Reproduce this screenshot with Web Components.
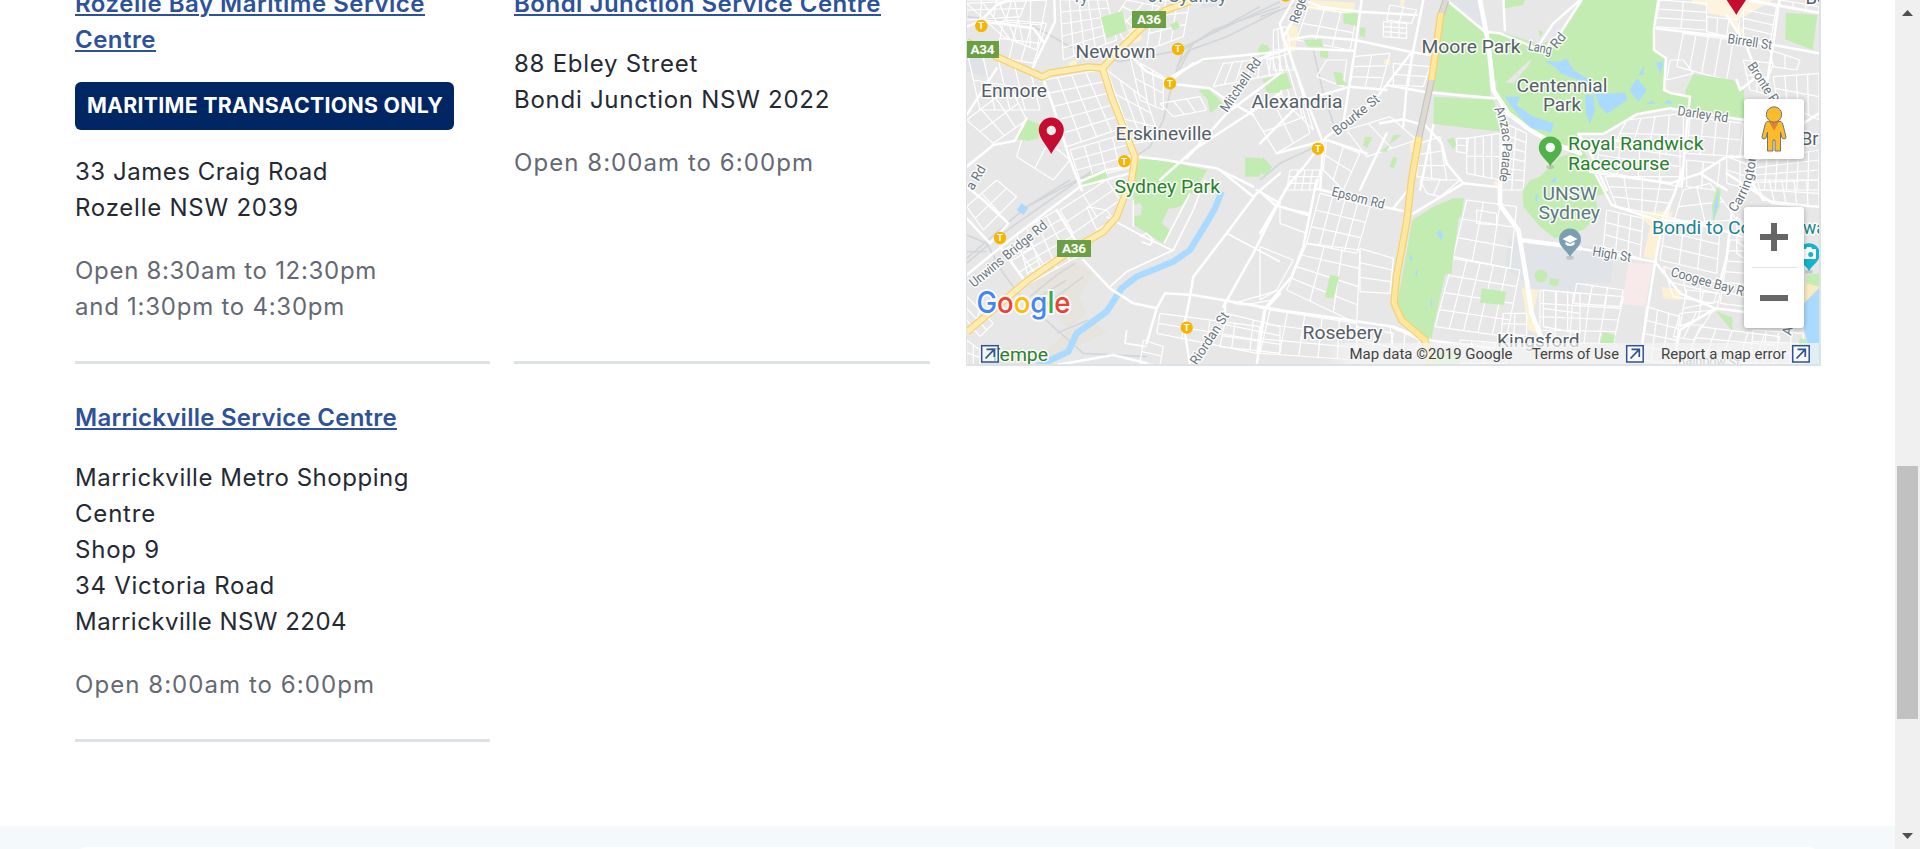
<!DOCTYPE html>
<html lang="en">
<head>
<meta charset="utf-8">
<title>Service centres</title>
<style>
html,body{margin:0;height:100%;overflow:hidden;background:#fff}
body{font:24px/36px Inter,"Open Sans",sans-serif;color:#242934}
</style>
</head>
<body>
<page-shell>
  <centre-finder>
    <centre-card>
      <fit-line slot="title" w="350">Rozelle Bay Maritime Service</fit-line>
      <fit-line slot="title" w="81">Centre</fit-line>
      <notice-badge slot="badge"><fit-line w="356">MARITIME TRANSACTIONS ONLY</fit-line></notice-badge>
      <fit-line slot="address" w="253">33 James Craig Road</fit-line>
      <fit-line slot="address" w="224">Rozelle NSW 2039</fit-line>
      <fit-line slot="hours" w="302">Open 8:30am to 12:30pm</fit-line>
      <fit-line slot="hours" w="270">and 1:30pm to 4:30pm</fit-line>
    </centre-card>
    <centre-card>
      <fit-line slot="title" w="367">Bondi Junction Service Centre</fit-line>
      <fit-line slot="address" w="184">88 Ebley Street</fit-line>
      <fit-line slot="address" w="316">Bondi Junction NSW 2022</fit-line>
      <fit-line slot="hours" w="300">Open 8:00am to 6:00pm</fit-line>
    </centre-card>
    <centre-card>
      <fit-line slot="title" w="322">Marrickville Service Centre</fit-line>
      <fit-line slot="address" w="334">Marrickville Metro Shopping</fit-line>
      <fit-line slot="address" w="81">Centre</fit-line>
      <fit-line slot="address" w="85">Shop 9</fit-line>
      <fit-line slot="address" w="200">34 Victoria Road</fit-line>
      <fit-line slot="address" w="272">Marrickville NSW 2204</fit-line>
      <fit-line slot="hours" w="300">Open 8:00am to 6:00pm</fit-line>
    </centre-card>
    <centre-map slot="map"></centre-map>
  </centre-finder>
  <page-scrollbar slot="scroll"></page-scrollbar>
</page-shell>
<script>
const define = (name, html, after) => customElements.define(name, class extends HTMLElement {
  connectedCallback() {
    if (this.shadowRoot) return;
    this.attachShadow({mode: 'open'}).innerHTML = html;
    if (after) after.call(this, this.shadowRoot);
  }
});

define('page-shell', `<style>
:host{display:flex;height:849px;overflow:hidden}
main{flex:1;display:flex;flex-direction:column;min-width:0}
.body{height:826px;overflow:hidden}
.band{height:23px;background:#f4f9fc;overflow:hidden;padding:21px 75px 0;box-sizing:border-box}
.panel{height:60px;border-radius:12px;background:#fff}
</style><main><div class="body"><slot></slot></div><div class="band"><div class="panel"></div></div></main><slot name="scroll"></slot>`);

define('centre-finder', `<style>
:host{display:flex;padding-left:75px;align-items:flex-start}
.list{display:grid;grid-template-columns:415px 416px;column-gap:24px;grid-template-rows:378px 378px;margin-top:-14px;width:855px;margin-right:36px}
</style><div class="list"><slot></slot></div><slot name="map"></slot>`);

define('centre-card', `<style>
:host{display:flex;flex-direction:column;box-sizing:border-box;border-bottom:3px solid #dce2e5}
:host(:nth-of-type(3)){padding-top:36px}
.title{color:#2e5299;font-weight:600;--line:underline}
.badge{margin-top:24px;display:none}
.badge.on{display:block}
.address{margin-top:24px}
.hours{margin-top:27px;color:#646974}
</style><div class="title"><slot name="title"></slot></div><div class="badge"><slot name="badge"></slot></div><div class="address"><slot name="address"></slot></div><div class="hours"><slot name="hours"></slot></div>`,
function (root) {
  if (this.querySelector('[slot=badge]')) root.querySelector('.badge').classList.add('on');
});

define('notice-badge', `<style>
:host{display:block;box-sizing:border-box;width:379px;height:48px;line-height:47px;padding:0 12px;border-radius:6px;background:#002664;color:#fff;font-size:21.3px;font-weight:700}
</style><slot></slot>`);

/* Spreads its letters so that the line comes out at the width asked for. */
define('fit-line', `<style>
:host{display:block;white-space:nowrap}
span{display:inline-block;text-decoration:var(--line,none);text-decoration-thickness:2px;text-underline-offset:2px}
</style><span><slot></slot></span>`, function (root) {
  const s = root.querySelector('span');
  const w = +this.getAttribute('w');
  s.style.letterSpacing = (w - s.getBoundingClientRect().width) / this.textContent.length + 'px';
});

define('page-scrollbar', `<style>
:host{display:flex;flex-direction:column;align-items:center;width:25px;background:#f0f0f0;flex:none}
i{width:21px;height:253px;background:#c1c1c1;margin-top:450px}
svg{display:block;width:11px;height:6px;fill:#505050}
.u{margin-top:10px}.d{margin-top:114px}
</style><svg class="u" viewBox="0 0 11 6"><path d="M0 6 5.5 0 11 6z"/></svg><i></i><svg class="d" viewBox="0 0 11 6"><path d="M0 0h11L5.500 6z"/></svg>`);

define('map-pegman', `<style>
:host{display:flex;align-items:center;justify-content:center;width:60px;height:60px;background:#fff;border-radius:3px;box-shadow:0 1px 5px rgba(0,0,0,.3)}
svg{width:26px;height:46px}
</style><svg viewBox="0 0 26 46"><path d="M6 15.500Q5 16 4 19L1 31q0 2 2 2l2-1 1.500-6V45H12V34h2V45h5.500V26L21 32l2 1q2 0 2-2L22 19q-1-3-2-3.500z" fill="#fbbc2c" stroke="#6f7378"/><path d="M7.500 15h11L13 24.500z" fill="#e08030"/><circle cx="13" cy="8.500" r="7.700" fill="#fbbc2c" stroke="#6f7378"/></svg>`);

define('map-zoom', `<style>
:host{display:flex;flex-direction:column;align-items:center;width:60px;height:121px;background:#fff;border-radius:3px;box-shadow:0 1px 5px rgba(0,0,0,.3)}
div{height:60px;width:60px;display:grid;place-items:center}
hr{width:45px;height:1px;border:0;margin:0;background:#e3e3e3}
svg{width:28px;height:28px;fill:#666}
</style><div><svg viewBox="0 0 28 28"><path d="M0 11h11V0h6v11h11v6H17v11h-6V17H0z"/></svg></div><hr><div><svg viewBox="0 0 28 28"><path d="M0 11h28v6H0z"/></svg></div>`);

/* Map sheets: origin of each on the page, geometry at three units per pixel. */
const sheets = [
 {x:960,y:0,
  area:['#dfe3e7|20 160 60 175 95 235 20 215','#dfe3e7|730 0 800 0 770 20 720 25','#fdf1d3|325 185 350 180 350 205 330 205','#fdf1d3|505 90 540 75 545 120 520 130'],
  park:['422 52 487 33 500 92 440 115','630 75 652 62 660 82 640 92','170 418 198 357 245 375 235 415 205 423','365 535 435 508 445 540 370 562','537 478 580 475 742 510 700 575 660 620 625 627 605 670 630 690 612 732 560 700 522 675 520 540','715 270 745 268 788 310 750 340 742 298','908 240 960 222 960 278 925 280','890 155 905 130 930 145 925 160','890 490 910 472 935 500 920 525 905 520','715 185 750 172 765 180'],
  rail:['20 50 200 70 260 100 330 140 480 185 640 155 800 80 960 5','640 240 670 150 760 90 960 20','960 30 800 110 690 150 640 240 610 360 570 440 480 500 370 530 200 620','650 200 700 130 900 20'],
  grid:['300 0 440 0 470 120 310 180 5 5','20 10 260 0 230 150 130 110 5 2','500 0 600 20 490 120 460 60 2 3','440 210 560 300 600 420 520 430 3 3','250 240 420 210 500 380 320 440 4 5','330 450 500 400 520 500 360 540 4 3','20 150 210 210 240 330 60 330 4 2','20 360 150 260 200 360 100 430 3 2','580 0 690 0 670 110 560 150 3 3','510 170 610 230 610 330 540 300 3 2','790 190 960 170 960 220 760 260 6 1','130 60 260 70 220 190 110 170 3 2','600 310 720 290 740 330 640 350 3 1','200 370 330 480 280 540 170 470 2 1','20 0 200 0 180 50 20 60 4 2'],
  major:['283 0 285 65 215 210','20 80 60 65 130 72 220 85 250 125','60 65 110 15 150 0','20 345 110 205','248 232 280 320 330 480 365 570','20 500 100 435 165 422 200 355','500 155 560 215 620 240 660 215 730 178 960 155','640 252 750 265 800 300 880 345','680 475 800 340 960 220','600 540 700 450 960 280','530 470 600 478 770 505 880 560','640 235 700 190','525 495 440 510 360 545']},
 {x:1260,y:0,
  area:['#fdf1d3|85 70 115 80 105 155 70 150','#fdf1d3|150 0 285 8 280 42 140 28','#fdf1d3|372 178 392 178 390 195 372 192','#fdf1d3|420 0 435 0 433 20 422 20','#e0e4e8|560 0 660 0 670 80 620 60','#fdf1d3|705 545 720 545 718 560 703 560','#fdf1d3|450 425 475 412 470 460 452 455'],
  park:['560 5 675 95 692 290 518 272 540 60','522 290 702 300 720 395 520 372','735 0 795 0 790 15 735 25','670 90 735 100 830 130 825 165 735 250 690 240','250 40 295 40 290 78 250 70','300 82 317 84 315 112 298 108','8 238 80 218 95 265 20 278','220 215 248 220 248 240 265 255 230 255','180 148 205 150 205 175 180 172','130 120 185 118 190 140 145 140','0 135 25 135 20 160 0 175','360 455 380 455 400 405 425 405','388 500 400 470 412 475 402 505','315 410 338 412 320 445 310 435','560 420 580 412 588 432 580 448','0 475 35 500 20 525 0 520','-45 472 0 475 0 530 -45 530'],
  rail:['0 50 150 0','160 150 190 280 220 370','0 540 60 490 190 430','180 560 190 450'],
  grid:['370 65 440 70 440 115 370 110 3 3','390 15 470 30 455 70 380 60 2 1','145 20 290 45 270 150 110 120 3 2','280 170 390 160 360 270 270 260 2 3','400 190 510 200 490 260 400 255 2 2','40 90 80 80 100 210 40 210 3 2','20 180 90 160 160 390 40 270 4 1','-30 330 120 300 150 400 50 460 2 2','620 415 720 400 720 540 620 520 4 2','735 370 800 400 790 570 720 570 2 6','480 430 540 410 560 540 470 530 2 3','260 390 390 350 470 420 320 470 2 1','200 420 300 460 250 570 190 510 2 2','90 510 180 510 170 570 80 570 4 3','200 180 260 180 250 260 170 230 1 1','590 415 625 415 620 460 590 455 1 2'],
  major:['0 175 90 145 280 152','130 0 100 60 70 110 85 150 135 290 190 430 180 570','100 0 60 70 70 120','145 5 180 20 300 35 470 45','305 0 285 150 250 370','85 120 150 108 285 120 450 155 510 165','490 0 460 150 345 300 200 410 140 490 75 570','100 310 270 260 380 270','380 255 490 275 590 285 705 295','560 0 675 95 720 100 830 145 880 70 960 0','495 375 545 430 560 490 610 550','360 370 430 358 490 375','430 380 440 260 460 150','0 430 120 310','720 540 730 400 735 350','730 0 735 90','300 570 380 400','50 460 200 420 320 460','520 375 480 570'],
  wide:['660 0 685 130 700 270 745 340 810 390 880 430 960 460']},
 {x:1540,y:0,
  area:['#fdf3df|455 0 700 0 620 45 590 60 615 105 590 100 555 50 505 40 500 18 455 10'],
  park:['125 0 355 0 342 150 378 175 372 270 450 290 440 325 390 325 290 345 195 402 120 402 115 430 60 440 -35 385 -135 300 -130 245 -80 250 -30 190 -20 140 60 110','460 222 580 240 600 265 612 270 612 362 440 328 435 275','738 38 832 45 818 150 735 118','-40 570 60 470 130 450 165 520 205 580 0 620','-5 90 10 95 0 112'],
  water:['15 182 60 185 80 175 100 210 140 235 150 250 100 235 60 220 50 205','165 282 255 278 262 300 200 342 180 320','135 285 160 285 165 330 150 372 138 340','268 270 290 235 320 270 295 305','295 225 312 197 310 225','348 188 370 185 362 222','320 312 335 300 345 312','370 310 388 299 400 312','-105 290 -60 290 -70 315 -20 350 40 370 35 395 -30 385 -85 320','-20 350 35 385 30 400 0 380','30 545 50 530 45 550'],
  grid:['360 0 500 10 500 90 345 80 2 3','430 100 580 120 560 240 410 200 4 1','500 50 600 60 590 115 500 95 3 1','610 0 710 20 690 130 610 110 1 4','390 180 430 180 460 220 380 240 1 1','690 150 780 180 770 210 700 200 2 1','700 230 837 220 837 360 710 300 4 2','260 360 430 340 430 470 220 440 4 2','180 420 420 440 420 560 170 510 4 2','450 350 610 370 600 470 440 460 4 2','440 480 540 490 530 570 440 560 2 1','650 480 837 450 837 570 640 570 6 4','610 180 700 190 670 280 630 270 2 2','560 470 640 500 640 570 560 550 2 2','720 0 837 20 837 40 720 20 3 1'],
  major:['125 0 60 100 20 140','355 0 342 85 342 150 378 175 372 270 395 280 450 290 440 380 425 560','345 85 560 110 700 135 837 160','115 402 190 402 290 343 390 325 450 335 650 365','115 402 150 455 200 570','150 515 250 530 390 550 480 520 560 470 650 470','560 45 620 140 650 220 700 300','600 -5 710 15 837 38','718 0 700 130 680 250','790 370 837 340','130 450 230 420 290 430','480 520 560 570','590 240 600 270 650 230']},
 {x:960,y:180,
  area:['#e7e4de|200 310 340 240 400 280 360 350 380 400 250 520 130 500 20 555 200 555 300 520 440 460 410 430 330 450'],
  park:['75 515 110 500 115 545 80 548','365 0 440 0 400 15 375 22'],
  bare:['522 75 540 68 546 80 542 105 524 108'],
  water:['170 90 185 70 205 85 190 105'],
  rail:['20 250 90 190 170 130 400 -30','20 235 200 80 330 0','20 165 80 190 130 280 190 360 370 520 560 530','20 215 80 215','210 350 290 285 345 250','250 380 370 290','240 350 320 300','290 460 385 420'],
  river:['785 35 765 85 745 120 690 210 640 245 530 290 485 325 440 395 350 460 325 515 230 560'],
  grid:['170 160 290 90 370 220 210 310 4 5','130 210 200 170 260 270 200 310 2 3','20 80 110 0 170 50 70 150 2 2','300 90 440 0 480 60 340 160 2 2','600 400 900 440 890 520 590 460 4 2','20 480 60 510 60 555 20 555 2 2','800 400 960 440 960 520 780 500 2 3','820 370 960 330 940 360 850 375 1 1','380 80 440 90 460 120 410 150 1 1','20 350 100 430 60 470 20 420 2 2','550 480 610 500 600 555 540 550 1 2'],
  major:['20 20 70 60 145 130 90 190 20 115','20 285 130 195 260 95 360 20 510 -20','370 240 450 325 520 370 590 385 615 340 700 345 960 390','590 385 560 490','960 60 880 220 790 380','960 -20 890 40 800 160 700 290 690 350 672 440 690 555','780 -30 880 50','890 30 960 70','915 390 890 555','795 370 795 430','290 90 370 220','120 200 200 310','290 555 460 525 560 550','960 340 915 390'],
  thin:['450 320 500 275 640 210 700 90 735 0','690 40 612 190','440 110 560 175 640 212','520 60 520 140','540 170 560 160 580 180 570 195 545 185','500 450 495 490 560 500','800 160 960 245']},
 {x:1260,y:180,
  area:['#e0e4e8|745 170 960 205 960 340 820 325 735 265','#fdf1d3|785 325 835 330 820 400 850 470 805 450','#fdf1d3|700 5 715 5 715 15 700 15'],
  park:['457 120 520 80 580 55 612 55 605 110 597 110 580 230 575 280 555 285 522 435 515 475 495 475 430 420 412 370','210 285 238 290 220 355 195 352','665 325 738 335 732 375 660 368','870 295 897 298 893 318 868 315','530 510 600 515 600 550 520 550'],
  water:['530 160 540 148 550 168 542 180','448 222 458 232 456 244 450 240','465 280 472 268 473 290','510 375 515 355 516 382'],
  grid:['180 40 330 80 290 220 140 190 4 3','140 190 300 210 290 430 80 330 3 4','300 205 400 235 390 340 300 335 1 3','30 390 290 430 290 540 0 520 5 3','620 60 770 80 750 265 580 230 3 3','580 235 780 270 740 470 525 440 5 4','650 90 710 100 710 135 650 130 1 1','60 80 150 100 140 160 60 130 1 1','730 400 800 400 800 500 720 490 2 3','850 330 960 340 960 460 850 440 3 2','480 0 600 0 540 50 500 40 2 1','0 200 100 240 50 330 0 360 1 1','390 440 480 480 460 530 400 500 2 1','290 440 400 460 380 540 290 520 2 2','600 480 740 490 740 550 600 550 4 1'],
  major:['0 160 95 0','170 0 130 200 95 290 15 385 0 460','0 382 200 410 400 440 500 480 700 505','0 35 45 75 145 105','175 28 220 38','375 82 440 95','460 100 610 10 720 22','400 85 440 35'],
  wide:['720 0 720 75 775 150 800 300 815 400 850 490','780 180 900 195 960 205']},
 {x:1540,y:180,
  area:['#e0e4e8|0 187 225 205 212 310 110 308 100 335 0 330','#f8eaea|265 248 340 252 315 378 245 372','#fdf1d3|290 95 400 95 375 140 345 240 310 230 330 140','#fdf1d3|365 320 425 330 420 360 370 355','#faeabf|795 310 837 290 837 330 790 370'],
  park:['-50 80 -52 30 -30 0 160 -60 175 0 165 60 180 100 130 150 45 175 0 140','527 393 578 413 576 452','190 455 225 465 220 492 180 488','515 80 530 20 542 30 538 80 520 125','780 475 800 480 800 500 775 495','800 285 837 280 837 320 800 310','30 295 57 300 52 318 28 314'],
  water:['525 70 536 25 533 80 518 122','792 370 837 325 837 552 800 552 805 500 790 440','-15 50 -6 40 -10 72'],
  grid:['195 -10 420 -10 380 110 230 80 4 3','200 90 310 115 300 235 190 200 3 3','380 110 540 150 530 280 360 240 3 3','0 330 250 350 220 490 0 490 5 4','370 260 540 310 520 370 400 350 3 2','430 30 510 10 590 120 400 130 2 2','110 310 250 330 240 380 100 370 3 1','320 380 420 410 400 552 300 540 3 4','420 400 520 390 460 480 400 470 2 2','480 440 720 470 700 552 440 540 5 3','570 180 620 180 620 380 540 370 1 6','590 110 620 140 620 240 590 220 1 3','650 0 837 0 837 80 670 60 5 2','640 450 790 460 790 552 630 552 4 3','440 330 540 340 530 390 420 440 2 2'],
  major:['160 -30 215 75 350 120','430 -40 400 50 370 110 345 250 305 500','350 120 470 125 620 175','0 188 60 195 345 245 420 340 525 385 610 395','525 385 420 450 400 552','540 310 560 230 575 100 590 70','560 -20 700 70 837 80','630 0 670 60']}
];

const path = s => { const n = s.split(' '); let d = 'M'; for (let i = 0; i < n.length; i += 2) d += (i ? 'L' : '') + n[i] + ' ' + n[i + 1]; return d; };
const gridPath = s => {
  const [a,b,c,d,e,f,g,h,n,m] = s.split(' ').map(Number); let o = '';
  const mix = (p,q,t) => Math.round(p + (q - p) * t);
  for (let i = 0; i <= n; i++) { const t = i / n; o += `M${mix(a,c,t)} ${mix(b,d,t)}L${mix(g,e,t)} ${mix(h,f,t)}`; }
  for (let j = 0; j <= m; j++) { const t = j / m; o += `M${mix(a,g,t)} ${mix(b,h,t)}L${mix(c,e,t)} ${mix(d,f,t)}`; }
  return o;
};
const layer = (key, attrs, fn) => sheets.map(s => s[key] ? `<g transform="translate(${s.x} ${s.y}) scale(.33333)" ${attrs}>${s[key].map(fn).join('')}</g>` : '').join('');
const line = s => `<path d="${path(s)}"/>`;
const shape = s => `<path d="${path(s)}Z"/>`;
const place = (t,x,y,w,c='',r=0) => `<text class="${c}" ${r ? `transform="translate(${x} ${y}) rotate(${r})"` : `x="${x}" y="${y}"`} textLength="${w}" lengthAdjust="spacingAndGlyphs">${t}</text>`;
const station = (x,y) => `<circle cx="${x}" cy="${y}" r="6.200" fill="#f6b500"/><text class="t" x="${x}" y="${y+3.2}">T</text>`;
const shield = (t,x,y,w=34) => `<rect x="${x}" y="${y}" width="${w}" height="17" fill="#6a9f43"/><text class="s" x="${x+w/2}" y="${y+13.3}" textLength="24">${t}</text>`;
const pin = (x,y,r,c) => `<ellipse cx="${x}" cy="${y+r*1.65}" rx="4" ry="2" fill="#999" opacity=".4"/><path d="M${x} ${y+r*1.6}C${x-2} ${y+r*1.1} ${x-r} ${y+r*.7} ${x-r} ${y}a${r} ${r} 0 0 1 ${2*r} 0C${x+r} ${y+r*.7} ${x+2} ${y+r*1.1} ${x} ${y+r*1.6}z" fill="${c}"/>`;
const redPin = (x,tip) => `<path d="M${x} ${tip}C${x-4} ${tip-8} ${x-12.5} ${tip-16} ${x-12.5} ${tip-24}a12.500 12.500 0 0 1 25 0C${x+12.5} ${tip-16} ${x+4} ${tip-8} ${x} ${tip}z" fill="#c60c30"/><circle cx="${x}" cy="${tip-23.5}" r="4.700" fill="#eee"/>`;
const outLink = x => `<g transform="translate(${x} 345)" fill="none" stroke="#2e5299"><rect x=".7" y=".7" width="16.500" height="16.300" stroke-width="1.500" fill="#fff" fill-opacity=".65"/><path d="M4.500 13.500 13 4.700M5.500 4.300H13.300V12" stroke-width="1.700"/></g>`;
const gold = ['M1190 1.500 1166 10 1141.500 28 1121.500 48 1102.500 68 1088 67 1050 73 1042.500 77 997 57 967 42','M1102.500 68 1111.500 97 1135 157 1131.500 181 1123 200 1116.500 217 1103 232 1073 249 1027 281 967 332','M1441 13 1431.500 80','M1419 137 1411.500 180 1406.500 223 1396.500 277 1394 303 1401.500 320 1425 340 1431 363'];

define('centre-map', `<style>
:host{display:block;position:relative;box-sizing:border-box;width:855px;height:366px;border:solid #dce2e5;border-width:0 2px 2px 1px;overflow:hidden;flex:none}
svg.sheet{display:block;width:852px;height:364px;background:#e7e7e7}
map-pegman,map-zoom{position:absolute;right:15px}
map-pegman{top:99px}map-zoom{top:207px}
text{font:18px Roboto,sans-serif;fill:#555f69;paint-order:stroke;stroke:#fff;stroke-width:3px;stroke-opacity:.85;stroke-linejoin:round}
text.r{font-size:13.5px;fill:#6a7680}
text.g{fill:#27822b}
text.b{fill:#5e7885}
text.c{fill:#1a858e}
text.t{font-size:9.5px;font-weight:700;fill:#fff;stroke:none;text-anchor:middle}
text.s{font-size:13.5px;font-weight:700;fill:#fff;stroke:none;text-anchor:middle}
text.a{font-size:15px;fill:#444;stroke:none}
text.logo{font:500 29.5px Inter,sans-serif;stroke-width:4px}
</style>
<svg class="sheet" viewBox="967 0 852 364">
${layer('area','',s => { const [c,p] = s.split('|'); return `<path fill="${c}" d="${path(p)}Z"/>`; })}
${layer('rail','fill="none" stroke="#d3d6d9" stroke-width="5"',line)}
${layer('grid','fill="none" stroke="#fff" stroke-width="3.600"',s => `<path d="${gridPath(s)}"/>`)}
${layer('park','fill="#c3ecb2"',shape)}
${layer('bare','fill="#e7e7e7"',shape)}
${layer('water','fill="#aadaff"',shape)}
${layer('river','fill="none" stroke="#aadaff" stroke-width="19" stroke-linejoin="round"',line)}
${layer('thin','fill="none" stroke="#fff" stroke-width="5"',line)}
${layer('major','fill="none" stroke="#fff" stroke-width="7.500" stroke-linejoin="round" stroke-linecap="round"',line)}
${layer('wide','fill="none" stroke="#fff" stroke-width="14" stroke-linejoin="round" stroke-linecap="round"',line)}
<circle cx="1541" cy="276" r="6.500" fill="#c3ecb2"/>
<g fill="none" stroke-linejoin="round"><path d="M1446 0 1441 15M1431.500 80 1419 137" stroke="#c9c5bd" stroke-width="7"/><path d="M1446 0 1441 15M1431.500 80 1419 137" stroke="#dedad3" stroke-width="4.500"/>
${gold.map(d => `<path d="${d}" stroke="#f7cf74" stroke-width="7.500"/>`).join('')}
${gold.map((d,i) => `<path d="${d}" stroke="${i > 1 ? '#ffe89c' : '#ffedb0'}" stroke-width="5"/>`).join('')}</g>
${place('ry',1075,2,13,'b')}${place('of Sydney',1147,2,80,'b')}
${place('Newtown',1075.5,58,80)}${place('Enmore',981,97,66)}${place('Erskineville',1115.5,140,96)}
${place('Alexandria',1251.5,107.500,91)}${place('Moore Park',1421.5,53,99)}
${place('Centennial',1516.5,91.500,91)}${place('Park',1543,111,38)}
${place('Royal Randwick',1568,150,135.500,'g')}${place('Racecourse',1568,170,101.500,'g')}
${place('Sydney Park',1114.5,192.500,105.500,'g')}${place('UNSW',1542.5,200,54.500,'b')}${place('Sydney',1538.5,219,61.500,'b')}
${place('Rosebery',1302.5,339,80)}${place('Kingsford',1497,347,82.500)}${place('Tempe',989,360.500,59,'g')}
${place('Bondi to Coogee',1652,234,142,'c')}${place('walk',1803,234,36,'c')}
${place('Bo',1805.5,4,22)}${place('Bronte',1801,145,53)}
${place('Mitchell Rd',1227,113,62,'r',-56)}${place('Bourke St',1337,136,56,'r',-39)}${place('Rege',1298,24,27,'r',-72)}
${place('Lang',1527.5,50,24,'r',11)}${place('Rd',1556.5,49.500,16,'r',-50)}
${place('Epsom Rd',1331,195.500,54,'r',14.500)}${place('Riordan St',1197,366,60,'r',-57)}${place('Unwins Bridge Rd',974,288,96,'r',-39.500)}
${place('a Rd',973,191,26,'r',-59)}${place('Birrell St',1727,43,45,'r',8.500)}${place('Darley Rd',1677,115,51,'r',8.500)}
${place('Bronte Rd',1747,66,52,'r',57)}${place('High St',1592,255.500,39,'r',9.500)}${place('Coogee Bay Rd',1670,276,82,'r',15.500)}
${place('Ar',1791,336,13,'r',-78)}${place('Rainbow St',1678,364,62,'r',3)}
<path id="anzac" d="M1494 109Q1508 132 1499 182" fill="none"/><path id="carr" d="M1735 213Q1753 191 1756 158L1760 120" fill="none"/>
<text class="r" textLength="74"><textPath href="#anzac">Anzac Parade</textPath></text>
<text class="r"><textPath href="#carr">Carrington Rd</textPath></text>
${[[981.3,26],[1178,49],[1170,83.300],[1124.3,161.300],[1318,148.700],[1285.7,-4.500],[1000,238],[1186.7,327.700]].map(p => station(...p)).join('')}
${shield('A36',1132,11)}${shield('A34',966,41,33)}${shield('A36',1057,240)}
${redPin(1051.3,154)}${redPin(1736.3,15)}
${pin(1550.3,148,11.500,'#50b348')}<circle cx="1550.300" cy="147.500" r="4.700" fill="#fff"/>
${pin(1570,239.500,11,'#7b9fb2')}<path d="M1562.500 239 1570 235 1577.500 239 1570 243zM1565.500 241.700 1570 244 1574.500 241.700V244.500Q1570 247.500 1565.500 244.500z" fill="#fff"/>
${pin(1809,254,10.800,'#12b5cb')}<path d="M1803 249h3l1-2h4l1 2h4v10h-13z" fill="#fff"/><circle cx="1810.700" cy="254.500" r="2.500" fill="#12b5cb"/>
<text class="logo" x="976.500" y="312.500" textLength="94" lengthAdjust="spacingAndGlyphs"><tspan fill="#4285f4">G</tspan><tspan fill="#ea4335">o</tspan><tspan fill="#fbbc05">o</tspan><tspan fill="#4285f4">g</tspan><tspan fill="#34a853">l</tspan><tspan fill="#ea4335">e</tspan></text>
<linearGradient id="fade"><stop stop-color="#f5f5f5" stop-opacity="0"/><stop offset="1" stop-color="#f5f5f5" stop-opacity=".72"/></linearGradient>
<path d="M1325 343h25v21h-25z" fill="url(#fade)"/><path d="M1350 343h469v21h-469z" fill="#f5f5f5" opacity=".72"/>
${place('Map data ©2019 Google',1349.5,359,163,'a')}${place('Terms of Use',1532,359,87,'a')}${place('Report a map error',1661,359,125,'a')}
${outLink(981)}${outLink(1626)}${outLink(1792)}
</svg><map-pegman></map-pegman><map-zoom></map-zoom>`);
</script>
</body>
</html>
